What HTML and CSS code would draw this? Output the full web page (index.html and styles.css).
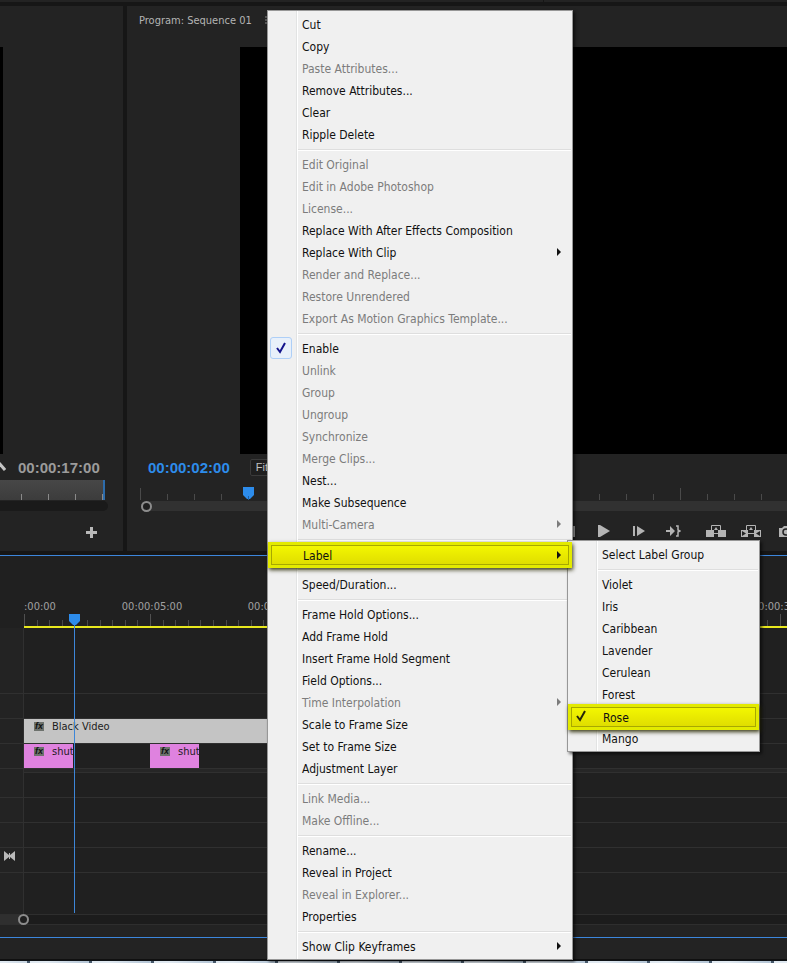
FILE: index.html
```html
<!DOCTYPE html>
<html lang="en">
<head>
    <meta charset="UTF-8">
    <meta name="viewport" content="width=device-width, initial-scale=1.0">
    <title>Sequence 01</title>
    <link rel="stylesheet" href="styles.css">
</head>
<body>
    <div class="app">
        <div class="top-strip"></div>
        <div class="monitors">
            <section class="monitor source">
                <div class="monitor-header"></div>
                <div class="screen"></div>
                <div class="info">
                    <svg class="wrench" width="6" height="12" viewBox="0 0 6 12"><path d="M-1 2 L5 9" stroke="#c4c4c4" stroke-width="3"/></svg>
                    <span class="timecode">00:00:17:00</span>
                </div>
                <div class="range"></div>
                <div class="zoom-bar"></div>
                <div class="transport">
                    <button class="icon" aria-label="Button editor">
                        <svg width="11" height="11" viewBox="0 0 11 11"><path d="M4 0h3v4h4v3H7v4H4V7H0V4h4z" fill="#b9b9b9"/></svg>
                    </button>
                </div>
            </section>

            <section class="monitor program">
                <div class="monitor-header">
                    <span>Program: Sequence 01</span>
                    <svg width="10" height="9" viewBox="0 0 10 9"><path d="M0 1h10M0 4h10M0 7h10" stroke="#8a8a8a"/></svg>
                </div>
                <div class="screen"></div>
                <div class="info">
                    <span class="timecode current">00:00:02:00</span>
                    <select class="fit" aria-label="Zoom level"><option>Fit</option></select>
                </div>
                <div class="range">
                    <svg class="marker" width="11" height="13" viewBox="0 0 11 13"><path d="M0 0h11v8L7 12H4L0 8z" fill="#2d8ceb"/><path d="M5 9h1v4H5z" fill="#1d5fa3"/></svg>
                </div>
                <div class="zoom-bar"><span class="knob"></span></div>
                <div class="transport">
                    <div class="group">
                        <button class="icon" aria-label="Step back">
                            <svg width="12" height="11" viewBox="0 0 12 11"><path d="M8 0v11L0 5.500zM9 0h3v11H9z" fill="#a9a9a9"/></svg>
                        </button>
                        <button class="icon" aria-label="Play">
                            <svg width="12" height="12" viewBox="0 0 12 12"><path d="M0 0h2l10 6-10 6H0z" fill="#b4b4b4"/></svg>
                        </button>
                        <button class="icon" aria-label="Step forward">
                            <svg width="12" height="10" viewBox="0 0 12 10"><path d="M0 0h2v10H0zM4 0l8 5-8 5z" fill="#b4b4b4"/></svg>
                        </button>
                        <button class="icon" aria-label="Go to out point">
                            <svg width="15" height="12" viewBox="0 0 15 12"><path d="M0 5h4V1l5 5-5 5V7H0z" fill="#b4b4b4"/><path d="M10 1h2v4l2 1-2 1v4h-2" fill="none" stroke="#b4b4b4" stroke-width="1.500"/></svg>
                        </button>
                    </div>
                    <div class="group">
                        <button class="icon" aria-label="Lift">
                            <svg width="20" height="12" viewBox="0 0 20 12"><path d="M0 5h8v7H0zM12 5h8v7h-8z" fill="#b4b4b4"/><path d="M5.500 5V.500h9V5M8 8.500h4" fill="none" stroke="#b4b4b4"/><path d="M10 2l2 3H8z" fill="#b4b4b4"/></svg>
                        </button>
                        <button class="icon" aria-label="Extract">
                            <svg width="20" height="12" viewBox="0 0 20 12"><path d="M0 5h7v7H0zM13 5h7v7h-7z" fill="#b4b4b4"/><path d="M1 6l4 2.500-4 2.500zM19 6l-4 2.500 4 2.500z" fill="#232323"/><path d="M5.500 5V.500h9V5M7 8.500h6" fill="none" stroke="#b4b4b4"/><path d="M10 2l2 3H8z" fill="#b4b4b4"/></svg>
                        </button>
                        <button class="icon" aria-label="Export frame">
                            <svg width="14" height="11" viewBox="0 0 14 11"><path d="M0 2h3l2-2h4l2 2h3v9H0z" fill="#b4b4b4"/><circle cx="7" cy="6" r="3" fill="none" stroke="#232323" stroke-width="1.500"/></svg>
                        </button>
                    </div>
                </div>
            </section>
        </div>

        <section class="timeline">
            <div class="ruler">
                <div class="labels">
                    <span class="first">:00:00</span>
                    <span class="sec5">00:00:05:00</span>
                    <span class="sec10">00:00:10:00</span>
                    <span class="sec30">00:00:30:00</span>
                </div>
                <div class="ticks"></div>
            </div>
            <div class="tracks">
                <div class="track spacer"><div class="head"></div><div class="lane"></div></div>
                <div class="track"><div class="head"></div><div class="lane"></div></div>
                <div class="track"><div class="head"></div><div class="lane">
                    <div class="clip black-video"><i class="fx">fx</i>Black Video</div>
                </div></div>
                <div class="track"><div class="head"></div><div class="lane">
                    <div class="clip rose"><i class="fx">fx</i>shut</div>
                    <div class="clip rose"><i class="fx">fx</i>shut</div>
                </div></div>
                <div class="track divider"><div class="head"></div><div class="lane"></div></div>
                <div class="track"><div class="head"></div><div class="lane"></div></div>
                <div class="track"><div class="head"></div><div class="lane"></div></div>
                <div class="track"><div class="head"></div><div class="lane"></div></div>
                <div class="track"><div class="head">
                    <svg width="11" height="10" viewBox="0 0 11 10"><path d="M0 0l5 4V2h1v2l5-4v10L6 6v2H5V6L0 10z" fill="#b9b9b9"/></svg>
                </div><div class="lane"></div></div>
                <div class="track bottom"><div class="head"></div><div class="lane"></div></div>
            </div>
            <div class="timeline-scroll"><div class="scroll-head"><span class="knob"></span></div></div>
            <div class="timeline-end"></div>
            <div class="playhead">
                <svg width="11" height="12" viewBox="0 0 11 12"><path d="M0 0h11v7L7 11H4L0 7z" fill="#2d8ceb"/></svg>
            </div>
        </section>
        <div class="status"></div>
        <div class="taskbar"></div>

        <ul class="menu clip-menu" role="menu">
            <li><button role="menuitem">Cut</button></li>
            <li><button role="menuitem">Copy</button></li>
            <li><button role="menuitem" disabled>Paste Attributes...</button></li>
            <li><button role="menuitem">Remove Attributes...</button></li>
            <li><button role="menuitem">Clear</button></li>
            <li><button role="menuitem">Ripple Delete</button></li>
            <li class="sep" role="separator"></li>
            <li><button role="menuitem" disabled>Edit Original</button></li>
            <li><button role="menuitem" disabled>Edit in Adobe Photoshop</button></li>
            <li><button role="menuitem" disabled>License...</button></li>
            <li><button role="menuitem">Replace With After Effects Composition</button></li>
            <li><button role="menuitem" class="more">Replace With Clip</button></li>
            <li><button role="menuitem" disabled>Render and Replace...</button></li>
            <li><button role="menuitem" disabled>Restore Unrendered</button></li>
            <li><button role="menuitem" disabled>Export As Motion Graphics Template...</button></li>
            <li class="sep" role="separator"></li>
            <li><button role="menuitemcheckbox" aria-checked="true"><span class="check boxed"><svg width="10" height="12" viewBox="0 0 10 12"><path d="M1 6l3 4L9 1" fill="none" stroke="#14148c" stroke-width="2"/></svg></span>Enable</button></li>
            <li><button role="menuitem" disabled>Unlink</button></li>
            <li><button role="menuitem" disabled>Group</button></li>
            <li><button role="menuitem" disabled>Ungroup</button></li>
            <li><button role="menuitem" disabled>Synchronize</button></li>
            <li><button role="menuitem" disabled>Merge Clips...</button></li>
            <li><button role="menuitem">Nest...</button></li>
            <li><button role="menuitem">Make Subsequence</button></li>
            <li><button role="menuitem" class="more" disabled>Multi-Camera</button></li>
            <li class="sep" role="separator"></li>
            <li><button role="menuitem" class="more marked">Label</button></li>
            <li class="sep" role="separator"></li>
            <li><button role="menuitem">Speed/Duration...</button></li>
            <li class="sep" role="separator"></li>
            <li><button role="menuitem">Frame Hold Options...</button></li>
            <li><button role="menuitem">Add Frame Hold</button></li>
            <li><button role="menuitem">Insert Frame Hold Segment</button></li>
            <li><button role="menuitem">Field Options...</button></li>
            <li><button role="menuitem" class="more" disabled>Time Interpolation</button></li>
            <li><button role="menuitem">Scale to Frame Size</button></li>
            <li><button role="menuitem">Set to Frame Size</button></li>
            <li><button role="menuitem">Adjustment Layer</button></li>
            <li class="sep" role="separator"></li>
            <li><button role="menuitem" disabled>Link Media...</button></li>
            <li><button role="menuitem" disabled>Make Offline...</button></li>
            <li class="sep" role="separator"></li>
            <li><button role="menuitem">Rename...</button></li>
            <li><button role="menuitem">Reveal in Project</button></li>
            <li><button role="menuitem" disabled>Reveal in Explorer...</button></li>
            <li><button role="menuitem">Properties</button></li>
            <li class="sep" role="separator"></li>
            <li><button role="menuitem" class="more">Show Clip Keyframes</button></li>
        </ul>

        <ul class="menu label-menu" role="menu">
            <li><button role="menuitem">Select Label Group</button></li>
            <li class="sep" role="separator"></li>
            <li><button role="menuitem">Violet</button></li>
            <li><button role="menuitem">Iris</button></li>
            <li><button role="menuitem">Caribbean</button></li>
            <li><button role="menuitem">Lavender</button></li>
            <li><button role="menuitem">Cerulean</button></li>
            <li><button role="menuitem">Forest</button></li>
            <li><button role="menuitemradio" aria-checked="true" class="marked"><span class="check"><svg width="10" height="12" viewBox="0 0 10 12"><path d="M1 6l3 4L9 1" fill="none" stroke="#26260a" stroke-width="2"/></svg></span>Rose</button></li>
            <li><button role="menuitem">Mango</button></li>
        </ul>
    </div>
</body>
</html>
```

FILE: styles.css
```css
* {
    box-sizing: border-box;
}
body {
    margin: 0;
    background-color: #161616;
    color: #b4b4b4;
    font-family: "DejaVu Sans Condensed", "Noto Sans", sans-serif;
    font-size: 12px;
}
svg {
    display: block;
}
button {
    border: 0;
    padding: 0;
    background: none;
    font: inherit;
    color: inherit;
}
.app {
    position: relative;
    display: flex;
    flex-direction: column;
    min-height: 100vh;
    overflow: hidden;
}
.top-strip {
    height: 2px;
    background: linear-gradient(90deg, #232323 543px, #161616 543px, #161616 544px, #232323 544px);
    margin-bottom: 4px;
}

/* Monitors */
.monitors {
    display: grid;
    grid-template-columns: 123px 1fr;
    gap: 4px;
    flex: 1;
}
.monitor {
    display: flex;
    flex-direction: column;
    background-color: #232323;
    min-width: 0;
}
.monitor-header {
    display: flex;
    align-items: center;
    gap: 13px;
    height: 41px;
    padding: 0 0 13px 12px;
    font-size: 11px;
}
.screen {
    flex: 1;
    background-color: #000;
}
.source .screen {
    margin-right: 120px;
}
.program .screen {
    margin-left: 113px;
}
.info {
    display: flex;
    align-items: center;
    height: 26px;
}
.wrench {
    margin-right: 12px;
}
.timecode {
    font: bold 15px "Liberation Sans", sans-serif;
    color: #9b9b9b;
}
.current {
    color: #2d8ceb;
}
.program .info {
    padding-left: 21px;
    gap: 20px;
}
.fit {
    appearance: none;
    width: 70px;
    height: 17px;
    padding: 0 5px;
    border: 1px solid #3a3a3a;
    border-radius: 2px;
    background-color: #1f1f1f;
    color: #c0c0c0;
    font: 11px "Liberation Sans", sans-serif;
}
.range {
    position: relative;
    height: 20px;
    margin-bottom: 1px;
}
.source .range {
    margin-right: 18px;
    border-right: 2px solid #2d6cab;
    background: repeating-linear-gradient(90deg, transparent 0 21px, #8a8a8a 21px 22px, transparent 22px 27px) 0 100% / 100% 6px no-repeat, linear-gradient(#474747, #3c3c3c);
}
.program .range {
    margin-left: 13px;
    background:
        repeating-linear-gradient(90deg, #4a4a4a 0 1px, transparent 1px 270px) 0 100% / 100% 12px no-repeat,
        repeating-linear-gradient(90deg, #4a4a4a 0 1px, transparent 1px 27px) 0 100% / 100% 6px no-repeat;
}
.marker {
    position: absolute;
    left: 103px;
    top: 7px;
}
.zoom-bar {
    height: 10px;
    display: flex;
    align-items: center;
}
.source .zoom-bar {
    margin-right: 15px;
    border-radius: 0 5px 5px 0;
    background-color: #1a1a1a;
}
.program .zoom-bar {
    margin-left: 14px;
    background-color: #313131;
    border-radius: 5px 0 0 5px;
}
.knob {
    width: 11px;
    height: 11px;
    border: 2px solid #8c8c8c;
    border-radius: 50%;
    background-color: #1f1f1f;
}
.transport {
    display: flex;
    height: 40px;
    gap: 7px;
}
.source .transport {
    justify-content: flex-end;
    padding: 2px 14px 0 0;
}
.program .transport {
    padding-left: 424px;
    overflow: hidden;
}
.group {
    display: flex;
}
.icon {
    display: flex;
    align-items: center;
    justify-content: center;
    flex: none;
    width: 35px;
}
.source .icon {
    width: 35px;
}

/* Timeline */
.timeline {
    position: relative;
    margin-top: 4px;
    border-top: 1px solid #3c86dc;
    border-bottom: 1px solid #3c86dc;
    background-color: #202020;
}
.ruler {
    margin-left: 24px;
    padding-top: 42px;
    border-bottom: 2px solid #e8e81e;
}
.labels {
    display: grid;
    grid-template-columns: 63px repeat(6, 126px);
    height: 16px;
    padding-left: 2px;
    line-height: 18px;
    font-size: 11px;
    text-align: center;
    overflow: hidden;
    color: #a0a0a0;
}
.labels .first {
    margin-left: -2px;
    text-align: left;
}
.labels .sec30 {
    grid-column: 7;
}
.ticks {
    height: 12px;
    background:
        repeating-linear-gradient(90deg, #505050 0 1px, transparent 1px 126px),
        repeating-linear-gradient(90deg, #484848 0 1px, transparent 1px calc(126px / 10)) 0 100% / 100% 6px no-repeat;
}
.track {
    display: grid;
    grid-template-columns: 24px 1fr;
    height: 25px;
    border-top: 1px solid #303030;
}
.track.spacer {
    height: 65px;
    border-top: 0;
}
.track.divider {
    height: 4px;
    background-color: #262626;
}
.track.bottom {
    height: 42px;
}
.head {
    display: flex;
    align-items: center;
    padding: 0 0 8px 4px;
    border-right: 1px solid #303030;
    background-color: #232323;
}
.lane {
    display: flex;
    gap: 77px;
    overflow: hidden;
}
.clip {
    display: flex;
    flex: none;
    align-items: flex-start;
    width: 49px;
    padding-left: 10px;
    overflow: hidden;
    font-size: 11px;
    line-height: 16px;
    color: #1c1c1c;
}
.black-video {
    width: 504px;
    background-color: #c4c4c4;
}
.rose {
    background-color: #df82df;
}
.fx {
    flex: none;
    width: 10px;
    height: 9px;
    margin: 3px 8px 0 0;
    background-color: #6d726d;
    color: #111;
    font: italic bold 9px/9px "Liberation Sans", sans-serif;
    text-align: center;
}
.timeline-scroll {
    height: 11px;
    border: 1px solid #2e2e2e;
    border-width: 1px 0;
    background-color: #1c1c1c;
}
.scroll-head {
    display: flex;
    align-items: center;
    justify-content: flex-end;
    width: 29px;
    height: 9px;
    background: linear-gradient(90deg, #2f2f2f 24px, transparent 24px);
}
.timeline-end {
    height: 12px;
    background-color: #232323;
}
.playhead {
    position: absolute;
    left: 69px;
    top: 58px;
    bottom: 24px;
    background: linear-gradient(#3d86d8, #3d86d8) 5px 0 / 1px 100% no-repeat;
}
.status {
    height: 22px;
    background-color: #232323;
    border-bottom: 1px solid #101010;
}
.taskbar {
    height: 3px;
    border-top: 1px solid #0e1216;
    background: repeating-linear-gradient(90deg, #46586a 0 3px, #dfe8f0 3px 20px, #b5c6d6 60px 62px) 27px 0;
}

/* Context menus */
.menu {
    position: absolute;
    margin: 0;
    padding: 2px 1px;
    list-style: none;
    border: 1px solid #979797;
    background: linear-gradient(90deg, transparent 28px, #e2e3e3 28px, #e2e3e3 29px, #fff 29px, #fff 30px, transparent 30px) #f0f0f0;
    box-shadow: 2px 2px 3px rgba(0, 0, 0, 0.6);
    color: #111;
}
.clip-menu {
    left: 267px;
    top: 10px;
    width: 306px;
}
.label-menu {
    left: 567px;
    top: 540px;
    width: 193px;
}
.menu button {
    position: relative;
    display: flex;
    align-items: center;
    width: 100%;
    height: 22px;
    padding: 2px 0 0 33px;
    text-align: left;
    white-space: nowrap;
}
.menu button:disabled {
    color: #7c7c7c;
}
.sep {
    height: 8px;
    margin-left: 29px;
    background: linear-gradient(transparent 4px, #dedede 4px, #dedede 5px, #fff 5px, #fff 6px, transparent 6px);
}
.more::after {
    content: "";
    margin: -2px 10px 0 auto;
    border: 4px solid transparent;
    border-left-color: currentColor;
    border-right: 0;
}
.check {
    position: absolute;
    left: 1px;
    top: 0;
    display: flex;
    align-items: center;
    justify-content: center;
    width: 22px;
    height: 22px;
}
.boxed {
    border: 1px solid #aecff7;
    border-radius: 3px;
    background-color: #e8f0fa;
}
/* Highlighted rows sit over the borders of both menus */
.menu .marked {
    z-index: 2;
    padding: 3px 0 0 34px;
}
.menu .marked::before {
    content: "";
    position: absolute;
    z-index: -1;
    inset: -1px -1px -3px;
    border: 3px solid #e3ea00;
    outline: 1px solid #a7a800;
    outline-offset: -4px;
    background: linear-gradient(#f4f800, #dfdc00);
    box-shadow: 1px 2px 4px rgba(40, 40, 0, 0.9);
}
```
